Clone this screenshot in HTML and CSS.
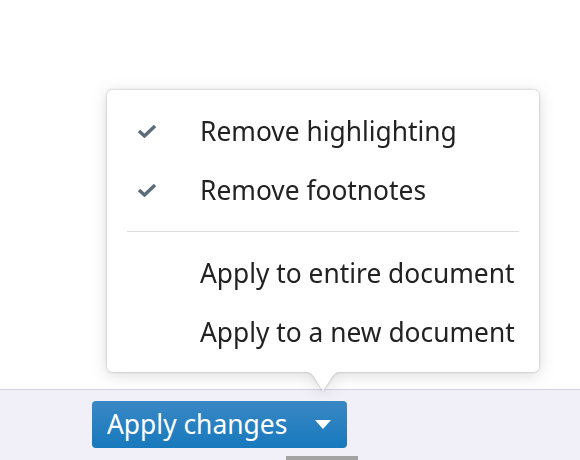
FILE: index.html
```html
<!DOCTYPE html>
<html>
<head>
<meta charset="utf-8">
<link rel="stylesheet" href="styles.css">
</head>
<body>
<div class="page">
  <div class="canvas"></div>
  <div class="bar">
    <button class="apply">
      <span class="apply-label">Apply changes</span>
      <svg class="caret" width="16" height="9" viewBox="0 0 16 9"><path d="M0 0 H16 L8 9 Z" fill="#fff"/></svg>
    </button>
    <div class="thumb"></div>
  </div>
  <div class="popover">
    <ul class="menu">
      <li class="item">
        <svg class="check" width="20" height="14" viewBox="0 0 20 14"><path d="M2 7 L7.5 12 L18 2" fill="none" stroke="#5b6b7a" stroke-width="3.4" stroke-linejoin="miter"/></svg>
        <span>Remove highlighting</span>
      </li>
      <li class="item">
        <svg class="check" width="20" height="14" viewBox="0 0 20 14"><path d="M2 7 L7.5 12 L18 2" fill="none" stroke="#5b6b7a" stroke-width="3.4" stroke-linejoin="miter"/></svg>
        <span>Remove footnotes</span>
      </li>
      <li class="sep"></li>
      <li class="item"><span class="nocheck"></span><span>Apply to entire document</span></li>
      <li class="item"><span class="nocheck"></span><span>Apply to a new document</span></li>
    </ul>
    <svg class="arrow" width="48" height="21" viewBox="0 0 48 21"><path d="M0 0 C9 0 11 1 15 6 L24 20 L33 6 C37 1 39 0 48 0 Z" fill="#fff"/></svg>
  </div>
</div>
</body>
</html>
```
FILE: styles.css
```css
html, body {
  margin: 0;
  padding: 0;
  background: #fff;
  font-family: "Noto Sans", "Open Sans", sans-serif;
}
.page {
  position: relative;
  width: 580px;
  height: 460px;
  overflow: hidden;
  display: flex;
  flex-direction: column;
}
.canvas {
  height: 390px;
  background: #fff;
}
.bar {
  flex: 1;
  background: #f1f0f8;
  border-top: 1px solid #d5d1ea;
  padding: 11px 0 0 92px;
  display: flex;
  flex-direction: column;
  align-items: flex-start;
}
.apply {
  width: 255px;
  height: 47px;
  border: 0;
  border-radius: 4px;
  background: linear-gradient(#3a88c4, #1779bd);
  color: #fff;
  font-family: "Noto Sans", "Open Sans", sans-serif;
  font-size: 26.4px;
  padding: 0 16px 0 15px;
  display: flex;
  align-items: center;
  justify-content: space-between;
}
.apply-label {
  line-height: 1;
  margin-top: -1px;
}
.caret {
  display: block;
}
.thumb {
  margin-top: 8px;
  margin-left: 194px;
  width: 72px;
  height: 4px;
  background: #a3a3a3;
}
.popover {
  position: absolute;
  left: 107px;
  top: 90px;
  width: 432px;
  filter: drop-shadow(0 0 1px rgba(0,0,0,0.28)) drop-shadow(0 3px 8px rgba(0,0,0,0.14));
}
.menu {
  list-style: none;
  margin: 0;
  padding: 11px 0;
  background: #fff;
  border-radius: 5px;
}
.item {
  height: 59px;
  display: flex;
  align-items: center;
  padding-left: 30px;
  font-size: 26.35px;
  color: #222;
}
.check, .nocheck {
  display: block;
  width: 20px;
  margin-right: 43px;
  flex: none;
}
.sep {
  height: 1px;
  background: #dcdcdc;
  margin: 12px 20px 11px 20px;
}
.arrow {
  position: absolute;
  left: 192px;
  top: 281px;
  display: block;
}
```
